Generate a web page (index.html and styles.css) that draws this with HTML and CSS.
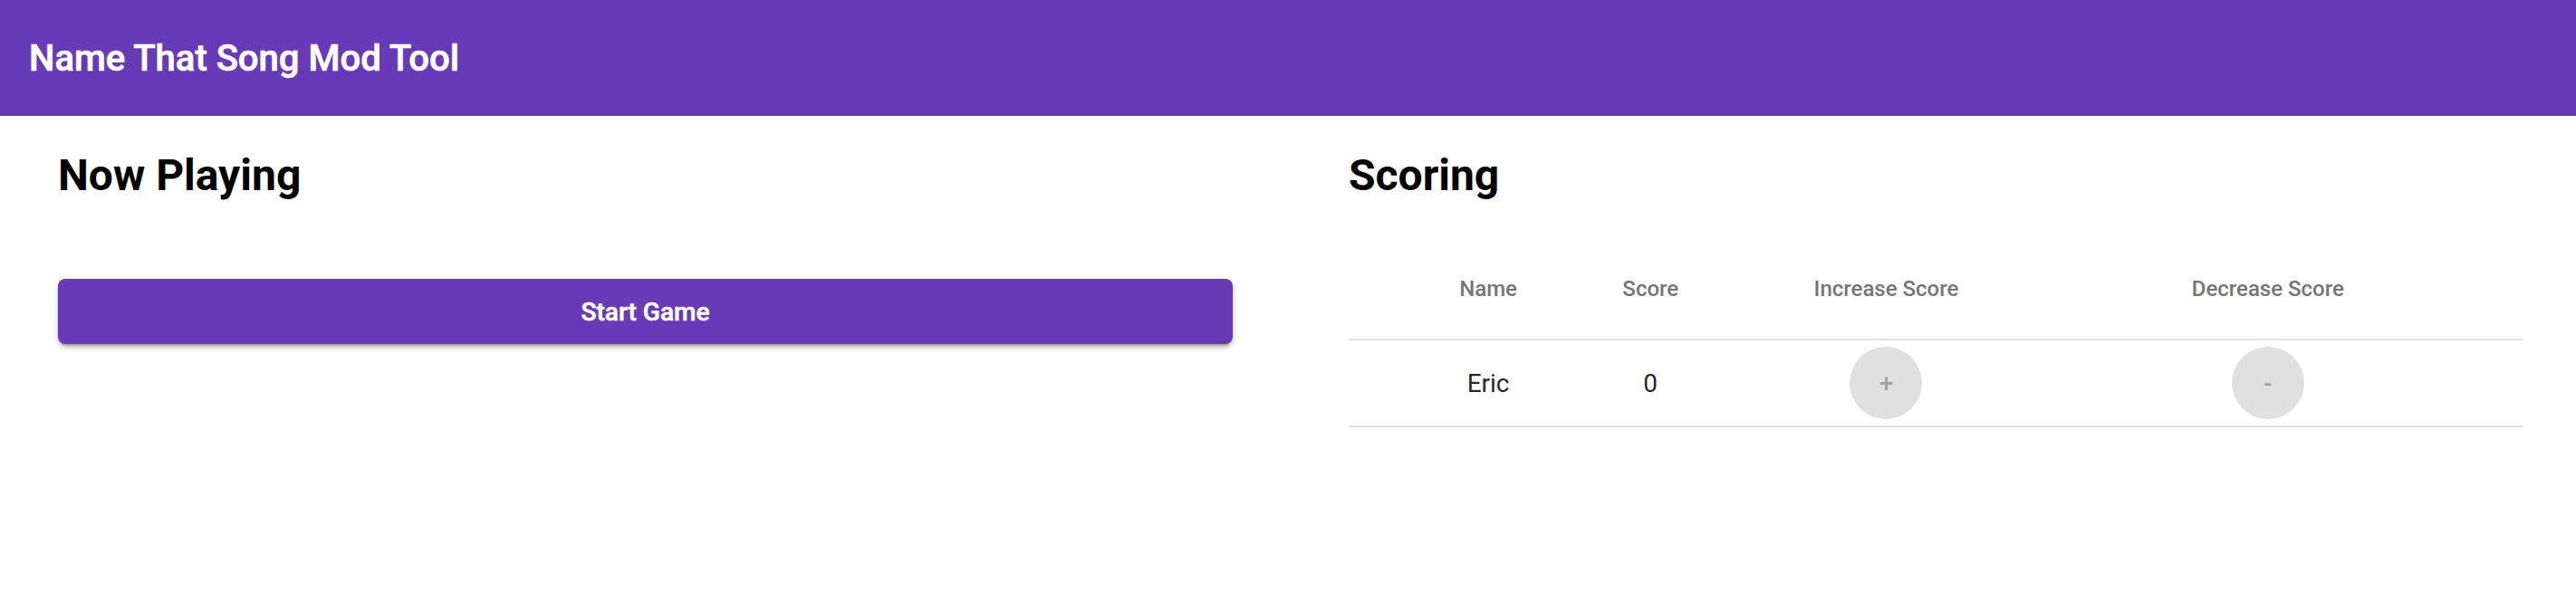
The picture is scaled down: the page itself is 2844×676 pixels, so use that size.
FILE: index.html
```html
<!DOCTYPE html>
<html lang="en">
<head>
<meta charset="utf-8">
<title>Name That Song Mod Tool</title>
<link rel="stylesheet" href="styles.css">
</head>
<body>
<header class="toolbar">
  <span class="toolbar-title">Name That Song Mod Tool</span>
</header>
<main class="content">
  <section class="panel">
    <h2 class="panel-title">Now Playing</h2>
    <button class="raised-btn" type="button">Start Game</button>
  </section>
  <section class="panel">
    <h2 class="panel-title">Scoring</h2>
    <table class="score-table">
      <colgroup>
        <col class="col-name">
        <col class="col-score">
        <col class="col-inc">
        <col class="col-dec">
      </colgroup>
      <thead>
        <tr>
          <th>Name</th>
          <th>Score</th>
          <th>Increase Score</th>
          <th>Decrease Score</th>
        </tr>
      </thead>
      <tbody>
        <tr>
          <td>Eric</td>
          <td>0</td>
          <td><button class="mini-fab" type="button" disabled>+</button></td>
          <td><button class="mini-fab" type="button" disabled>-</button></td>
        </tr>
      </tbody>
    </table>
  </section>
</main>
</body>
</html>
```

FILE: styles.css
```css
html, body {
  margin: 0;
  padding: 0;
  background: #ffffff;
  overflow: hidden;
}

body {
  font-family: Roboto, "Helvetica Neue", "Liberation Sans", sans-serif;
  color: rgba(0, 0, 0, 0.87);
}

.toolbar {
  height: 128px;
  background: #673ab7;
  color: #ffffff;
  display: flex;
  align-items: center;
  padding: 0 32px;
  box-sizing: border-box;
}

.toolbar-title {
  font-family: Roboto, "Liberation Sans", sans-serif;
  font-size: 40px;
  font-weight: 500;
  -webkit-text-stroke: 0.7px #ffffff;
}

.content {
  display: grid;
  grid-template-columns: 1fr 1fr;
  column-gap: 128px;
  padding: 34px 58px 0 64px;
}

.panel {
  display: flex;
  flex-direction: column;
  min-width: 0;
}

.panel-title {
  margin: 0;
  font-size: 48px;
  line-height: 64px;
  font-weight: 700;
  color: #000000;
}

.raised-btn {
  margin-top: 82px;
  height: 72px;
  border: none;
  border-radius: 8px;
  background: #673ab7;
  color: #ffffff;
  font-family: Roboto, "Liberation Sans", sans-serif;
  font-size: 28px;
  font-weight: 500;
  -webkit-text-stroke: 0.6px #ffffff;
  cursor: pointer;
  box-shadow: 0 6px 2px -4px rgba(0, 0, 0, 0.2),
              0 4px 4px 0 rgba(0, 0, 0, 0.14),
              0 2px 10px 0 rgba(0, 0, 0, 0.12);
}

.score-table {
  margin-top: 38px;
  width: 100%;
  border-collapse: collapse;
  table-layout: fixed;
}

.col-name { width: 260px; }
.col-score { width: 146px; }
.col-inc { width: 374px; }
.col-dec { width: 516px; }

.score-table th,
.score-table td {
  padding: 0;
  text-align: center;
  border-bottom: 2px solid #e0e0e0;
}

.score-table th:first-child,
.score-table td:first-child {
  padding-left: 48px;
}

.score-table th:last-child,
.score-table td:last-child {
  padding-right: 48px;
}

.score-table th {
  height: 110px;
  font-size: 24px;
  font-weight: 500;
  color: #757575;
}

.score-table td {
  height: 94px;
  font-size: 28px;
  font-weight: 400;
  color: rgba(0, 0, 0, 0.87);
}

.mini-fab {
  width: 80px;
  height: 80px;
  border-radius: 50%;
  border: none;
  background: #e0e0e0;
  color: rgba(0, 0, 0, 0.3);
  font-family: Roboto, "Liberation Sans", sans-serif;
  font-size: 28px;
  font-weight: 500;
  display: inline-flex;
  align-items: center;
  justify-content: center;
  padding: 0;
  vertical-align: middle;
}
```
